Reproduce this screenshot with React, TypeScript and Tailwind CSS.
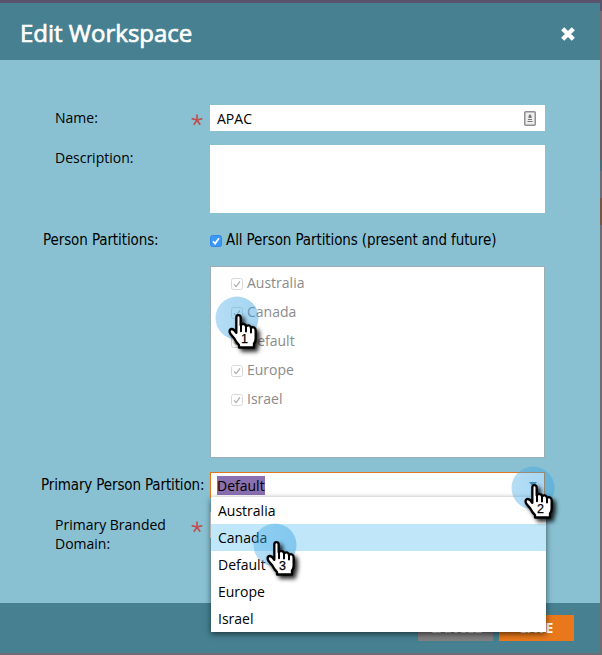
import React from "react";

const partitions = ["Australia", "Canada", "Default", "Europe", "Israel"];

function Hand({ n, className }: { n: number; className: string }) {
  return (
    <svg width="64" height="64" viewBox="0 0 64 64" className={`pointer-events-none absolute z-20 overflow-visible ${className}`}>
      <defs>
        <filter id={`shadow-${n}`} x="-50%" y="-50%" width="200%" height="200%" colorInterpolationFilters="sRGB">
          <feDropShadow dx="9" dy="9" stdDeviation="7" floodColor="#000" floodOpacity="0.85" />
        </filter>
        <linearGradient id={`halo-${n}`} x1="0" y1="0" x2="1" y2="0">
          <stop offset="0" stopColor="#46aae6" stopOpacity="0.4" />
          <stop offset="1" stopColor="#3aa2e2" stopOpacity="0.46" />
        </linearGradient>
      </defs>
      <circle cx="22" cy="22" r="21.5" fill={`url(#halo-${n})`} />
      <g transform="translate(13 16.5) scale(0.3333)" filter={`url(#shadow-${n})`}>
        <path
          d="M25 56 V15 Q25 8 31 8 Q38 8 38 15 V38 Q41 33 48 35 Q54 36 54 42 Q58 37 64 39 Q69 41 69 47 Q73 42 78 45 Q83 47 83 54 V78 Q83 87 78 93 V105 H33 V98 Q24 89 19 78 L7 64 Q2 54 8 50 Q16 47 25 61 Z"
          fill="#fff" stroke="#000" strokeWidth="7" strokeLinejoin="round"
        />
        <path d="M39 38 V56 M54 42 V57 M69 46 V60" stroke="#000" strokeWidth="6" strokeLinecap="round" />
      </g>
      <text x="29.5" y="46.5" textAnchor="middle" fontSize="12.5" fill="#000" stroke="#000" strokeWidth="0.25" fontFamily="Liberation Sans, sans-serif">{n}</text>
    </svg>
  );
}

function Label({ children, required, className = "" }: { children: React.ReactNode; required?: boolean; className?: string }) {
  return (
    <div className={`flex w-[210px] shrink-0 justify-between whitespace-nowrap pr-[7.5px] pl-[55px] leading-[19px] ${className}`}>
      <span>{children}</span>
      {required && (
        <svg width="12" height="12" viewBox="0 0 12 12" className="mt-[6px]">
          <path d="M6 0.5V6M6 6L0.7 4.6M6 6L11.3 4.6M6 6L2.8 10.8M6 6L9.2 10.8" stroke="#c0504f" strokeWidth="1.7" />
        </svg>
      )}
    </div>
  );
}

function Check({ muted }: { muted?: boolean }) {
  return (
    <svg width="12" height="12" viewBox="0 0 12 12" className="mt-[2px] shrink-0">
      <rect x="0.5" y="0.5" width="11" height="11" rx="2" fill={muted ? "#fff" : "#3b99fc"} stroke={muted ? "#d8d8d8" : "#3489e6"} />
      <path d="M3 6.3L5.1 8.6L9 3.3" fill="none" stroke={muted ? "#aaa" : "#fff"} strokeWidth={muted ? 1.2 : 1.7} />
    </svg>
  );
}

export default function App() {
  return (
    <div className="relative h-[655px] w-[602px] overflow-hidden bg-[linear-gradient(#5b536b_0_11px,#746c6e_11px_80px,#655f60_80px_160px,#516977_160px_171px,#6d6c70_171px_198px,#765643_198px_225px,#6d6c70_225px)] pt-[3px] font-['Open_Sans','Noto_Sans',sans-serif] text-[14px] text-black">
      <div className="flex h-[650px] w-[600px] flex-col bg-[#89c1d2]">
        <header className="flex h-[57px] shrink-0 items-center justify-between bg-[#468091] pr-[25px] pl-[20px] text-white">
          <h1 className="mt-[3px] text-[24px] [-webkit-text-stroke:0.7px_white]">Edit Workspace</h1>
          <svg width="14" height="14" viewBox="0 0 14 14" className="mt-[5px]"><path d="M1.7 1.7L12.3 12.3M12.3 1.7L1.7 12.3" stroke="#fff" strokeWidth="4.4" /></svg>
        </header>
        <main className="flex h-[543px] shrink-0 flex-col pt-[45px]">
          <div className="flex h-[40px]">
            <Label required className="pt-[3px]">Name:</Label>
            <div className="flex h-[26px] w-[335px] items-center justify-between bg-white pr-[9px] pl-[7px]">
              <span>APAC</span>
              <svg width="12" height="15" viewBox="0 0 12 15"><rect x="0.75" y="0.75" width="10.5" height="13.5" rx="1" fill="#eee" stroke="#909090" strokeWidth="1.5" /><path d="M6 3L7.5 5V7H4.5V5ZM4 8H8V9H4ZM3.5 10H8.5V11H3.5Z" fill="#777" /></svg>
            </div>
          </div>
          <div className="flex h-[85px]">
            <Label className="pt-[3px]">Description:</Label>
            <div className="h-[68px] w-[335px] bg-white" />
          </div>
          <div className="flex h-[36px] font-['DejaVu_Sans_Condensed','DejaVu_Sans',sans-serif] text-[15px] [font-stretch:condensed]">
            <div className="w-[210px] pl-[43px] leading-[20px] tracking-[-0.1px]">Person Partitions:</div>
            <div className="flex h-[20px] items-center gap-1"><Check /><span className="whitespace-nowrap tracking-[-0.1px]">All Person Partitions (present and future)</span></div>
          </div>
          <div className="ml-[210px] h-[192px] w-[335px] shrink-0 border border-[#9badb5] bg-white pt-[1px] pl-[20px] text-[#8b8b8b]">
            {partitions.map((p) => (
              <div key={p} className="flex h-[29px] items-center gap-1"><Check muted /><span>{p}</span></div>
            ))}
          </div>
          <div className="mt-[14px] flex h-[44px] shrink-0">
            <div className="w-[210px] pt-[3px] pl-[41px] font-['DejaVu_Sans_Condensed','DejaVu_Sans',sans-serif] text-[15px] leading-[20px] tracking-[-0.13px] whitespace-nowrap [font-stretch:condensed]">Primary Person Partition:</div>
            <div className="relative h-[26px] w-[335px] border border-[#e0751b] bg-white pt-[3px] pl-[6px]">
              <span className="block h-[19px] w-fit bg-[#8a6fb1] leading-[19px]">Default</span>
              <svg width="8" height="5" viewBox="0 0 8 5" className="absolute top-[9px] right-[7px]"><path d="M0 0H8L4 5Z" fill="#397a91" /></svg>
              <ul className="absolute top-[24px] left-0 z-10 h-[135px] w-[335px] bg-white shadow-[0_2px_6px_rgba(0,0,0,0.6)]">
                {partitions.map((p) => (
                  <li key={p} className={`flex h-[27px] items-center pl-[7px] ${p === "Canada" ? "bg-[#c0e7f9]" : ""}`}>{p}</li>
                ))}
              </ul>
            </div>
          </div>
          <div className="flex"><Label required className="-mt-px">Primary Branded<br />Domain:</Label><div className="-mt-[4px] h-[26px] w-[335px] bg-[#eee]" /></div>
        </main>
        <footer className="flex h-[50px] justify-end gap-[6px] bg-[#468091] pt-[12px] pr-[26px] text-[14px] font-bold text-white">
          <button className="h-[26px] w-[75px] bg-[#808080] pb-[2px] tracking-[-0.4px] text-[#ddd]">CANCEL</button>
          <button className="h-[26px] w-[75px] bg-[#e8781b] pb-[2px] tracking-[-0.4px]">SAVE</button>
        </footer>
      </div>
      <Hand n={1} className="top-[295.5px] left-[214.7px]" />
      <Hand n={2} className="top-[465.5px] left-[510.5px]" />
      <Hand n={3} className="top-[522.5px] left-[252.5px]" />
    </div>
  );
}
